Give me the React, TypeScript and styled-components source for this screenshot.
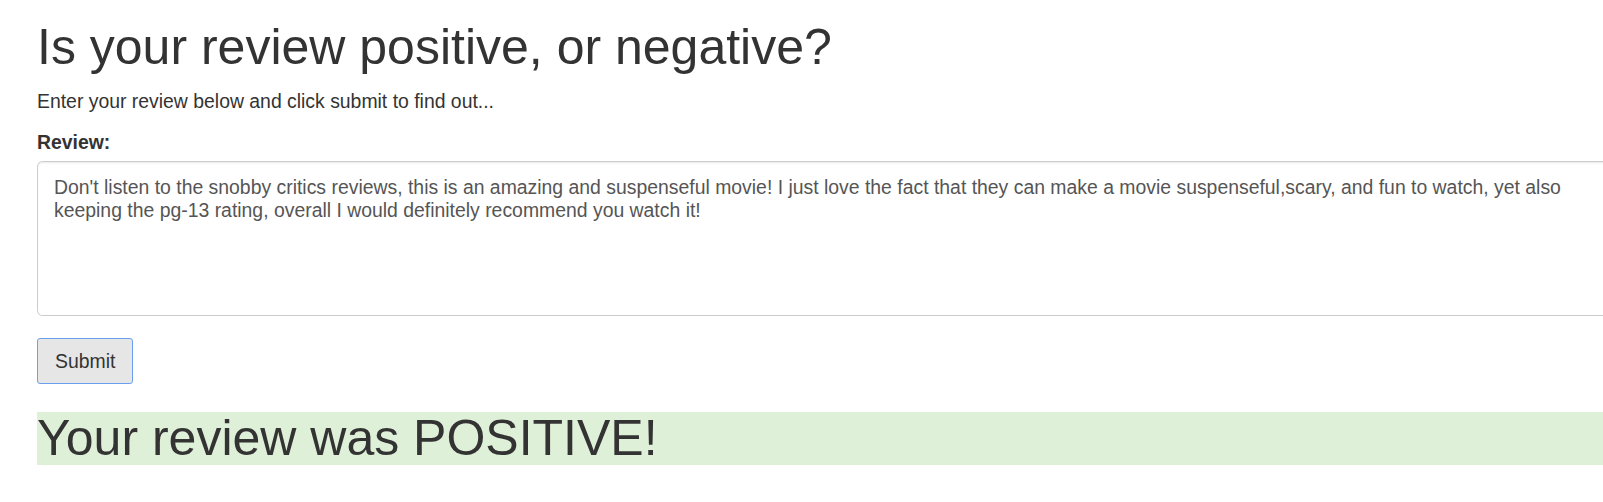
import React, { useState } from "react";
import styled, { createGlobalStyle } from "styled-components";

const GlobalStyle = createGlobalStyle`
  html, body {
    margin: 0;
    padding: 0;
    background: #ffffff;
    overflow: hidden;
  }
  body {
    font-family: "Liberation Sans", Arial, Helvetica, sans-serif;
    font-size: 19.4px;
    line-height: 26.67px;
    color: #333333;
  }
  * { box-sizing: border-box; }
`;

const Page = styled.div`
  padding: 21px 0 0 37px;
  width: 1660px;
`;

const Title = styled.h1`
  font-size: 50px;
  font-weight: normal;
  line-height: 53px;
  margin: 0 0 14px;
  color: #333333;
`;

const Intro = styled.p`
  margin: 0 0 14px;
`;

const Form = styled.form`
  display: flex;
  flex-direction: column;
  align-items: flex-start;
`;

const FieldGroup = styled.div`
  display: flex;
  flex-direction: column;
  align-items: flex-start;
  margin-bottom: 22px;
`;

const Label = styled.label`
  font-weight: bold;
  margin-bottom: 5.5px;
`;

const ReviewArea = styled.textarea`
  width: 1620px;
  height: 155px;
  padding: 14px 62px 8px 16px;
  border: 1.33px solid #cccccc;
  border-radius: 5.33px;
  box-shadow: inset 0 1.33px 1.33px rgba(0, 0, 0, 0.075);
  font-family: inherit;
  font-size: 19.4px;
  line-height: 23.5px;
  color: #555555;
  background: #ffffff;
  resize: none;
  outline: none;
`;

const SubmitButton = styled.button`
  height: 46px;
  padding: 8px 17px;
  font-family: inherit;
  font-size: 19.4px;
  line-height: 26.67px;
  color: #333333;
  background: #e6e6e6;
  border: 1.5px solid #6a9ff0;
  border-radius: 3px;
  cursor: pointer;
`;

const Result = styled.h1<{ $positive: boolean }>`
  font-size: 50px;
  font-weight: normal;
  line-height: 53px;
  margin: 28px 0 0;
  color: #333333;
  background: ${(p) => (p.$positive ? "#dff0d8" : "#f2dede")};
`;

export default function App() {
  const [review, setReview] = useState(
    "Don't listen to the snobby critics reviews, this is an amazing and suspenseful movie! I just love the fact that they can make a movie suspenseful,scary, and fun to watch, yet also keeping the pg-13 rating, overall I would definitely recommend you watch it!"
  );
  return (
    <>
      <GlobalStyle />
      <Page>
        <Title>Is your review positive, or negative?</Title>
        <Intro>Enter your review below and click submit to find out...</Intro>
        <Form onSubmit={(e) => e.preventDefault()}>
          <FieldGroup>
            <Label htmlFor="review">Review:</Label>
            <ReviewArea
              id="review"
              value={review}
              onChange={(e) => setReview(e.target.value)}
            />
          </FieldGroup>
          <SubmitButton type="submit">Submit</SubmitButton>
        </Form>
        <Result $positive>Your review was POSITIVE!</Result>
      </Page>
    </>
  );
}
